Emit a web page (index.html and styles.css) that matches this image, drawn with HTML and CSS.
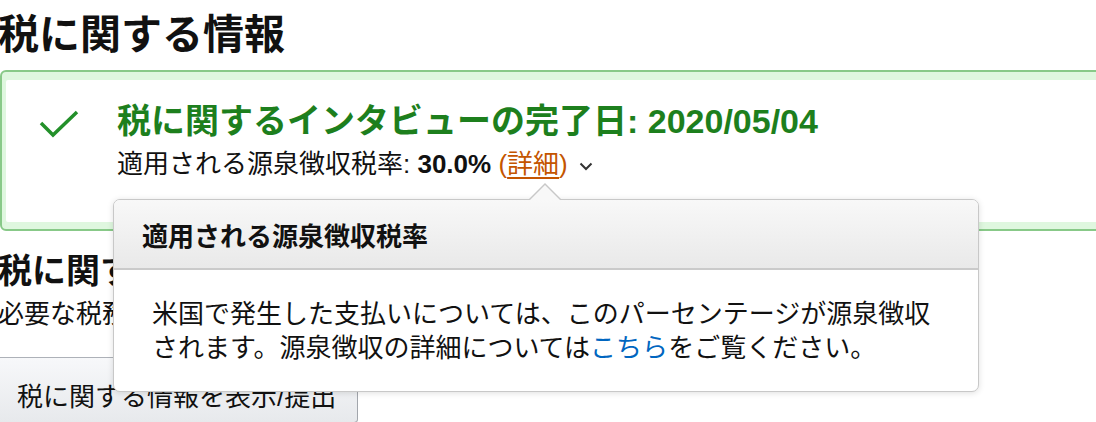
FILE: index.html
```html
<!DOCTYPE html>
<html lang="ja">
<head>
    <meta charset="UTF-8">
    <title>税に関する情報</title>
    <link rel="stylesheet" href="styles.css">
</head>
<body>
    <div class="page">
        <h1 class="page-title">税に関する情報</h1>

        <div class="alert">
            <div class="alert-inner">
                <svg class="alert-icon" width="40" height="30" viewBox="0 0 40 30">
                    <polyline points="2,13 14,25 38,2" fill="none" stroke="#23902a" stroke-width="3.5"/>
                </svg>
                <div class="alert-content">
                    <h2 class="alert-heading">税に関するインタビューの完了日: 2020/05/04</h2>
                    <p class="rate">適用される源泉徴収税率: <b>30.0%</b> <span class="detail">(<a href="#">詳細</a>)</span>
                        <svg class="chevron" width="14" height="9" viewBox="0 0 14 9">
                            <polyline points="1.5,1.5 7,7 12.5,1.5" fill="none" stroke="#333" stroke-width="2"/>
                        </svg>
                    </p>
                </div>
            </div>
        </div>

        <h2 class="section-title">税に関する情報の確認</h2>
        <p class="section-text">必要な税務情報を確認してください。</p>
        <button class="btn">税に関する情報を表示/提出</button>

        <!-- popover opened from (詳細) -->
        <div class="popover">
            <div class="popover-header">適用される源泉徴収税率</div>
            <div class="popover-body">
                米国で発生した支払いについては、このパーセンテージが源泉徴収されます。源泉徴収の詳細については<a href="#">こちら</a>をご覧ください。
            </div>
        </div>
    </div>
</body>
</html>
```

FILE: styles.css
```css
html, body {
    margin: 0;
    overflow: hidden;
    background: #fff;
}

body {
    font-family: "Liberation Sans", "Noto Sans CJK JP", sans-serif;
    color: #111;
}

.page {
    position: relative;
    width: 1120px;
}

.page-title {
    margin: 0;
    padding-top: 11px;
    font-size: 41px;
    line-height: 49px;
    font-weight: bold;
    margin-left: -2px;
}

/* Success alert */
.alert {
    margin-top: 10px;
    border: 2px solid #88c988;
    border-radius: 6px;
    background: #dff7df;
    padding: 8px 0 7px 4px;
}

.alert-inner {
    background: #fff;
    border-radius: 2px;
    display: flex;
    align-items: flex-start;
    height: 142px;
    box-sizing: border-box;
    padding: 20px 0 0 33px;
}

.alert-icon {
    margin-top: 10px;
    flex: none;
}

.alert-content {
    margin-left: 38px;
}

.alert-heading {
    margin: 0;
    font-size: 34px;
    line-height: 42px;
    color: #1d7f1d;
    font-weight: bold;
}

.rate {
    margin: 4px 0 0;
    font-size: 26px;
    line-height: 36px;
}

.rate b {
    font-weight: bold;
}

.detail {
    color: #c45500;
}

.detail a {
    color: #c45500;
    text-decoration: underline;
    text-decoration-thickness: 2px;
    text-underline-offset: 4px;
}

.chevron {
    margin-left: 4px;
    vertical-align: middle;
}

.section-title {
    margin: 20px 0 0 -2px;
    font-size: 34px;
    line-height: 40px;
    font-weight: bold;
}

.section-text {
    margin: 6px 0 0 -2px;
    font-size: 26px;
    line-height: 34px;
}

.btn {
    margin: 26px 0 0 -4px;
    width: 362px;
    height: 66px;
    padding: 8px 0 0 20px;
    text-align: left;
    font-family: inherit;
    font-size: 26px;
    color: #111;
    border: 1px solid #adb1b8;
    border-color: #adb1b8 #a2a6ac #8d9096;
    border-radius: 4px;
    background: linear-gradient(#f7f8fa, #e7e9ec);
}

/* Popover */
.popover {
    position: absolute;
    left: 113px;
    top: 199px;
    width: 866px;
    height: 193px;
    box-sizing: border-box;
    background: #fff;
    border: 1px solid #c8c8c8;
    border-radius: 7px;
    box-shadow: 0 1px 6px rgba(0,0,0,0.13);
}

.popover::before,
.popover::after {
    content: "";
    position: absolute;
    left: 415px;
    border: 16px solid transparent;
    border-top: 0;
}

.popover::before {
    top: -17px;
    border-bottom: 16px solid #c8c8c8;
}

.popover::after {
    top: -15px;
    left: 416px;
    border-width: 0 15px 15px;
    border-bottom-color: #f8f8f8;
}

.popover-header {
    height: 70px;
    box-sizing: border-box;
    padding: 0 28px;
    display: flex;
    align-items: center;
    font-size: 26px;
    font-weight: bold;
    background: linear-gradient(#f8f8f8, #e9e9e9);
    border-bottom: 2px solid #cacaca;
    border-radius: 6px 6px 0 0;
}

.popover-body {
    padding: 27px 38px 0;
    font-size: 26px;
    line-height: 34px;
}

.popover-body a {
    color: #0066c0;
    text-decoration: none;
}
```
